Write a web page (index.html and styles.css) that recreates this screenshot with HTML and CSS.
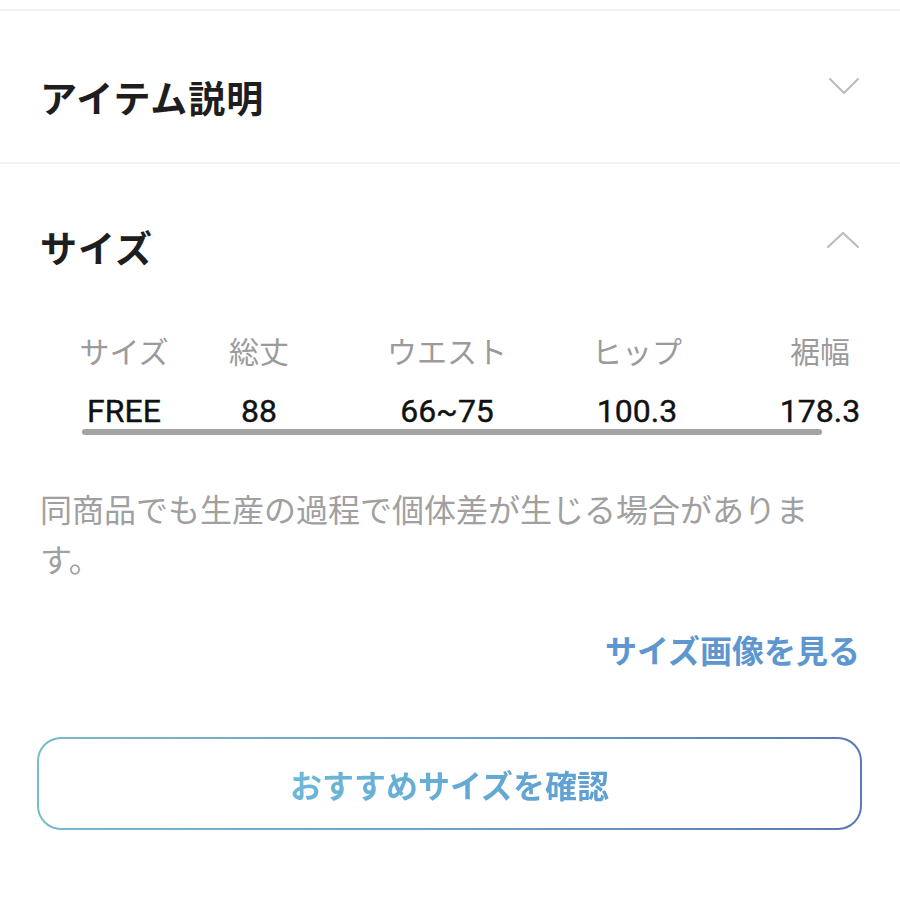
FILE: index.html
```html
<!DOCTYPE html>
<html lang="ja">
<head>
<meta charset="utf-8">
<link rel="stylesheet" href="styles.css">
</head>
<body>
<div class="page">
  <div class="rule rule-top"></div>
  <section class="panel panel-desc">
    <div class="panel-head">
      <h2 class="panel-title">アイテム説明</h2>
      <svg class="chev chev-down" width="32" height="18" viewBox="0 0 32 18"><polyline points="2,2 16,16 30,2" fill="none" stroke="#bdbdbd" stroke-width="2.2" stroke-linecap="round" stroke-linejoin="round"/></svg>
    </div>
  </section>
  <div class="rule"></div>
  <section class="panel panel-size">
    <div class="panel-head">
      <h2 class="panel-title">サイズ</h2>
      <svg class="chev chev-up" width="34" height="18" viewBox="0 0 34 18"><polyline points="2,16 17,2 32,16" fill="none" stroke="#bdbdbd" stroke-width="2.2" stroke-linecap="round" stroke-linejoin="round"/></svg>
    </div>
    <div class="size-table">
      <div class="th">サイズ</div>
      <div class="th">総丈</div>
      <div class="th">ウエスト</div>
      <div class="th">ヒップ</div>
      <div class="th last">裾幅</div>
      <div class="td">FREE</div>
      <div class="td">88</div>
      <div class="td">66~75</div>
      <div class="td">100.3</div>
      <div class="td last">178.3</div>
    </div>
    <div class="scroll-bar"></div>
    <p class="note">同商品でも生産の過程で個体差が生じる場合がありま す。</p>
    <div class="link-row"><a class="size-link">サイズ画像を見る</a></div>
    <button class="recommend-btn"><span class="btn-text">おすすめサイズを確認</span></button>
  </section>
</div>
</body>
</html>
```

FILE: styles.css
```css
* { box-sizing: border-box; }
html, body { margin: 0; padding: 0; background: #fff; }
body {
  font-family: "Noto Sans CJK JP", "Noto Sans", sans-serif;
  color: #222;
  width: 900px;
  height: 900px;
  overflow: hidden;
}
.page { width: 900px; }
.rule { height: 2px; background: #f1f1f1; }
.rule-top { margin-top: 9px; }

.panel { padding: 0 40px; }
.panel-desc { padding-top: 64px; padding-bottom: 43px; }
.panel-size { padding-top: 61px; }

.panel-head {
  display: flex;
  justify-content: space-between;
  align-items: flex-start;
}
.panel-title {
  margin: 0;
  font-size: 37px;
  line-height: 44px;
  font-weight: 700;
  color: #1e1e1e;
  letter-spacing: 1px;
}
.chev { display: block; }
.chev-down { margin-top: 2px; }
.chev-up { margin-top: 6px; }

.size-table {
  margin: 61px -40px 0 38px;
  display: grid;
  grid-template-columns: 92px 178px 198px 182px 1fr;
}
.th {
  text-align: center;
  font-size: 30px;
  line-height: 40px;
  color: #9b9b9b;
  white-space: nowrap;
  margin-bottom: 23px;
}
.td {
  text-align: center;
  font-family: Roboto, "Liberation Sans", sans-serif;
  font-size: 32px;
  line-height: 36px;
  font-weight: 400;
  color: #111;
  white-space: nowrap;
  -webkit-text-stroke: 0.4px #111;
}
.last { padding-left: 12px; }

.scroll-bar {
  margin: 0 0 0 42px;
  width: 740px;
  height: 6px;
  border-radius: 3px;
  background: #a3a3a3;
}

.note {
  margin: 48px 0 0 0;
  width: 780px;
  font-size: 32px;
  line-height: 50px;
  color: #a0a0a0;
}

.link-row {
  margin-top: 46px;
  display: flex;
  justify-content: flex-end;
}
.size-link {
  font-size: 32px;
  line-height: 40px;
  font-weight: 700;
  color: #5e97cf;
}

.recommend-btn {
  display: flex;
  align-items: center;
  justify-content: center;
  margin: 68px 0 0 -3px;
  width: 825px;
  height: 93px;
  border: 2px solid transparent;
  border-radius: 24px;
  background:
    linear-gradient(#fff, #fff) padding-box,
    linear-gradient(90deg, #78bcc6 0%, #6aa3c8 50%, #5b78b6 100%) border-box;
  font-family: "Noto Sans CJK JP", sans-serif;
  padding: 0;
}
.btn-text {
  font-size: 32px;
  line-height: 40px;
  font-weight: 700;
  background: linear-gradient(90deg, #6db7d8, #5e9fd2);
  -webkit-background-clip: text;
  background-clip: text;
  color: transparent;
}
```
